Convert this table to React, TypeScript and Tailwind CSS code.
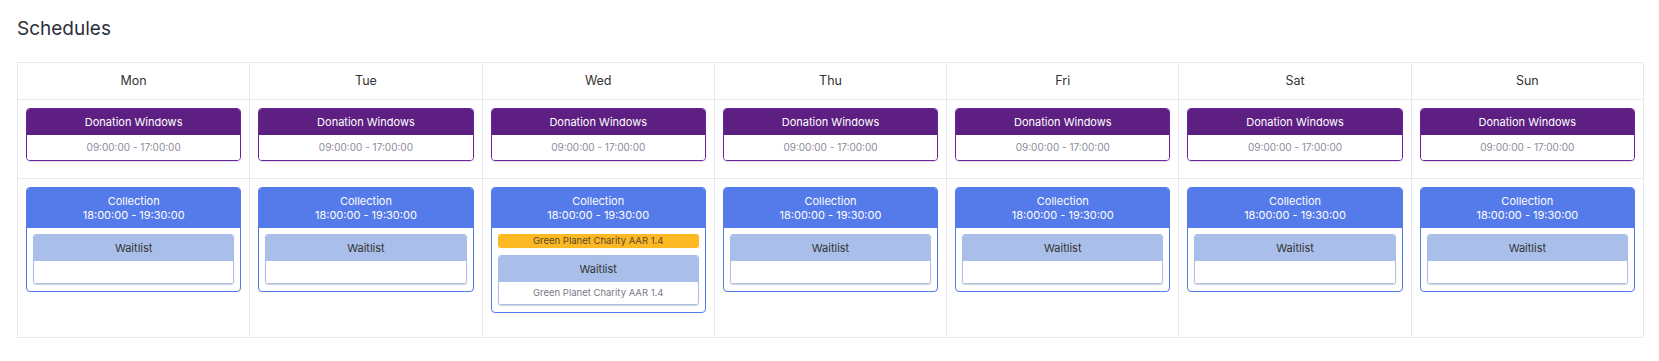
import React from 'react';

type Day = {
    name: string;
    booked?: string;
    waitlist?: string;
};

const days: Day[] = [
    { name: 'Mon' },
    { name: 'Tue' },
    { name: 'Wed', booked: 'Green Planet Charity AAR 1.4', waitlist: 'Green Planet Charity AAR 1.4' },
    { name: 'Thu' },
    { name: 'Fri' },
    { name: 'Sat' },
    { name: 'Sun' },
];

function DonationCard() {
    return (
        <div className="rounded-[4px] border border-[#6a23a0] overflow-hidden shadow-[0_1px_1px_rgba(0,0,0,0.12)]">
            <div className="h-[26px] bg-[#5d1f82] flex items-center justify-center text-[11px] text-white">
                Donation Windows
            </div>
            <div className="h-[25px] bg-white flex items-center justify-center text-[10px] text-[#8b8b9c]">
                09:00:00 - 17:00:00
            </div>
        </div>
    );
}

function CollectionCard({ day }: { day: Day }) {
    return (
        <div className="rounded-[4px] border border-[#557ae9] overflow-hidden bg-white">
            <div className="h-[40px] bg-[#557ae9] flex flex-col items-center justify-center text-[11px] leading-[14px] text-white">
                <span>Collection</span>
                <span>18:00:00 - 19:30:00</span>
            </div>
            <div className="px-[6px] pt-[6px] pb-[7px] flex flex-col gap-[7px]">
                {day.booked && (
                    <div className="h-[14px] rounded-[3px] bg-[#fdb924] flex items-center justify-center text-[9.5px] text-[#5a4a2a]">
                        {day.booked}
                    </div>
                )}
                <div className="rounded-[3px] border border-[#a9bfea] overflow-hidden shadow-[0_1px_1px_rgba(0,0,0,0.18)]">
                    <div className="h-[26px] bg-[#a9bfea] flex items-center justify-center text-[11px] text-[#333]">
                        Waitlist
                    </div>
                    <div className="h-[22px] bg-white flex items-center justify-center text-[9.5px] text-[#7a7a88]">
                        {day.waitlist ?? ''}
                    </div>
                </div>
            </div>
        </div>
    );
}

export default function App() {
    return (
        <div
            className="min-h-[361px] bg-white pl-[17px] pr-[15px] pt-[18px]"
            style={{ fontFamily: 'Inter, "Noto Sans", sans-serif' }}>
            <h1 className="text-[19px] leading-[22px] text-[#2b2f3a] font-normal">Schedules</h1>

            <div className="mt-[22px] grid grid-cols-7 border-l border-t border-[#e8e8ee]">
                {/* header row */}
                {days.map((d) => (
                    <div
                        key={d.name + '-h'}
                        className="h-[37px] border-r border-b border-[#e8e8ee] flex items-center justify-center text-[12.5px] text-[#333]">
                        {d.name}
                    </div>
                ))}

                {/* donation windows */}
                {days.map((d) => (
                    <div key={d.name + '-d'} className="h-[79px] border-r border-b border-[#e8e8ee] p-2">
                        <DonationCard />
                    </div>
                ))}

                {/* collections */}
                {days.map((d) => (
                    <div key={d.name + '-c'} className="h-[159px] border-r border-b border-[#e8e8ee] p-2">
                        <CollectionCard day={d} />
                    </div>
                ))}
            </div>
        </div>
    );
}
